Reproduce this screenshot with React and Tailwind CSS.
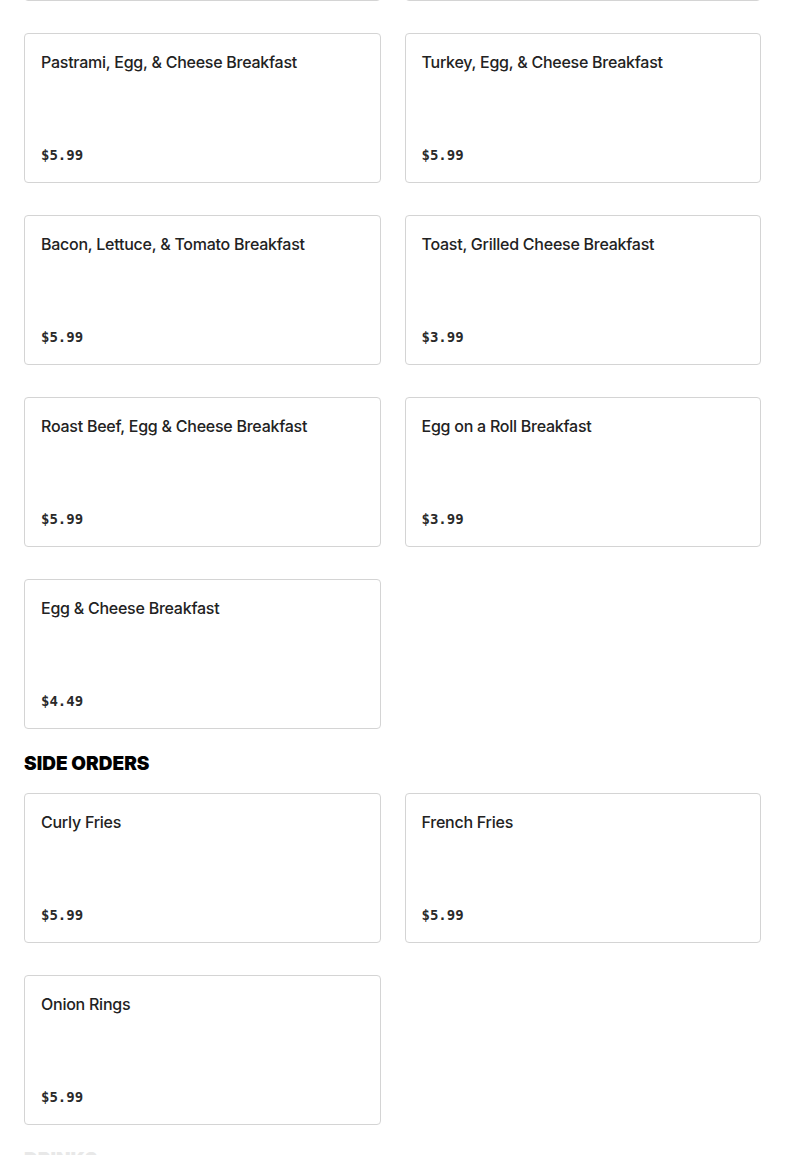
const sections = [
  {
    title: "BREAKFAST",
    hideTitle: true,
    items: [
      { name: "Ham, Egg, & Cheese Breakfast", price: "$5.99" },
      { name: "Sausage, Egg, & Cheese Breakfast", price: "$5.99" },
      { name: "Pastrami, Egg, & Cheese Breakfast", price: "$5.99" },
      { name: "Turkey, Egg, & Cheese Breakfast", price: "$5.99" },
      { name: "Bacon, Lettuce, & Tomato Breakfast", price: "$5.99" },
      { name: "Toast, Grilled Cheese Breakfast", price: "$3.99" },
      { name: "Roast Beef, Egg & Cheese Breakfast", price: "$5.99" },
      { name: "Egg on a Roll Breakfast", price: "$3.99" },
      { name: "Egg & Cheese Breakfast", price: "$4.49" },
    ],
  },
  {
    title: "SIDE ORDERS",
    items: [
      { name: "Curly Fries", price: "$5.99" },
      { name: "French Fries", price: "$5.99" },
      { name: "Onion Rings", price: "$5.99" },
    ],
  },
  {
    title: "DRINKS",
    faded: true,
    items: [],
  },
];

const MenuCard = ({ item }) => (
  <div className="h-[150px] border border-[#d4d4d4] rounded-[4px] bg-white p-4 flex flex-col justify-between">
    <h3 className="text-[16px] leading-6 font-medium text-[#222] tracking-[-0.25px] font-['Inter',sans-serif]">
      {item.name}
    </h3>
    <span className="text-[14px] leading-5 -mt-px mb-px font-bold text-[#2a2a2a] font-['DejaVu_Sans_Mono',monospace]">
      {item.price}
    </span>
  </div>
);

export default function App() {
  return (
    <div className="w-[785px] h-[1155px] overflow-hidden bg-white">
      <div className="px-6 -mt-[149px]">
        {sections.map((section) => (
          <section key={section.title}>
            {!section.hideTitle && (
              <h2
                className={
                  section.faded
                    ? "mt-[21px] mb-[15px] text-[19px] leading-7 font-black text-[#e8e8e8] font-['Inter',sans-serif]"
                    : "mt-[21px] mb-[15px] text-[19px] leading-7 font-black text-black font-['Inter',sans-serif]"
                }
              >
                {section.title}
              </h2>
            )}
            {section.items.length > 0 && (
              <div className="grid grid-cols-2 gap-x-6 gap-y-8">
                {section.items.map((item) => (
                  <MenuCard key={item.name} item={item} />
                ))}
              </div>
            )}
          </section>
        ))}
      </div>
    </div>
  );
}
